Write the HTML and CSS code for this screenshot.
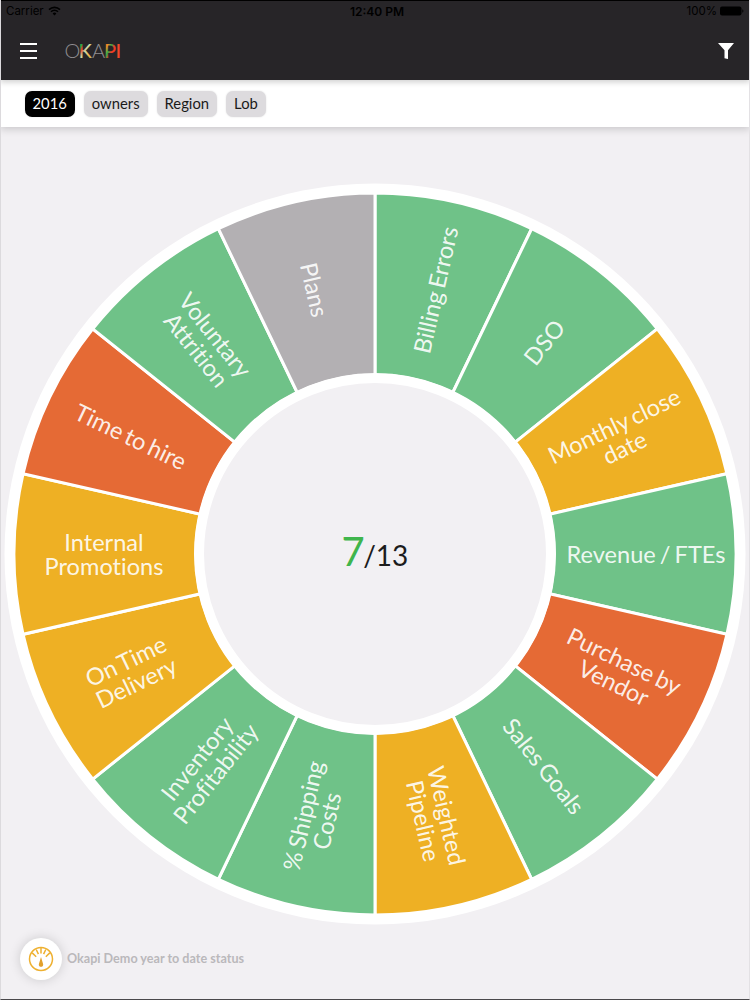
FILE: index.html
```html
<!DOCTYPE html>
<html lang="en">
<head>
    <meta charset="UTF-8">
    <meta name="viewport" content="width=device-width, initial-scale=1.0">
    <title>Okapi</title>
    <link rel="stylesheet" href="styles.css">
</head>
<body>
    <header class="header">
        <div class="status-bar">
            <div class="carrier">
                <span>Carrier</span>
                <svg width="13" height="10" viewBox="0 0 13 10" fill="none" stroke="#000" stroke-width="1.6">
                    <path d="M1 3.6a7.8 7.8 0 0 1 11 0"/>
                    <path d="M3 5.8a5 5 0 0 1 7 0"/>
                    <path d="M6.5 9.4L4.6 7.4a2.7 2.7 0 0 1 3.8 0z" fill="#000" stroke="none"/>
                </svg>
            </div>
            <span class="clock">12:40 PM</span>
            <div class="battery">
                <span>100%</span>
                <svg width="24" height="10" viewBox="0 0 24 10">
                    <rect x="0" y="0.5" width="21.5" height="9" rx="2"/>
                    <path d="M22.3 3.2a2 2 0 0 1 0 3.6z"/>
                </svg>
            </div>
        </div>
        <div class="nav">
            <svg class="menu" width="17" height="16" viewBox="0 0 17 16" fill="#fff">
                <rect y="0" width="17" height="2"/>
                <rect y="7" width="17" height="2"/>
                <rect y="14" width="17" height="2"/>
            </svg>
            <svg class="logo" width="60" height="28" viewBox="0 0 60 28">
                <defs>
                    <linearGradient id="stripes" x1="0" y1="0" x2="1" y2="1">
                        <stop offset="0" stop-color="#2fae4a"/>
                        <stop offset="0.25" stop-color="#1fb045"/>
                        <stop offset="0.35" stop-color="#e8452c"/>
                        <stop offset="0.5" stop-color="#c8dcae"/>
                        <stop offset="0.75" stop-color="#f0b040"/>
                        <stop offset="1" stop-color="#7ec8a0"/>
                    </linearGradient>
                    <linearGradient id="fire" x1="0" y1="0" x2="1" y2="1">
                        <stop offset="0" stop-color="#f03420"/>
                        <stop offset="0.3" stop-color="#f08a2a"/>
                        <stop offset="0.45" stop-color="#2fae4a"/>
                        <stop offset="0.6" stop-color="#f03c24"/>
                        <stop offset="1" stop-color="#f03c24"/>
                    </linearGradient>
                </defs>
                <text x="-0.5" y="21" class="logo-thin">O</text>
                <text x="13.5" y="21" class="logo-bold" fill="url(#stripes)">K</text>
                <text x="27" y="21" class="logo-thin">A</text>
                <text x="39" y="21" class="logo-bold" fill="url(#fire)">P</text>
                <text x="50.5" y="21" class="logo-bold" fill="#f0482a">I</text>
            </svg>
            <svg class="funnel" width="16" height="16" viewBox="0 0 16 16" fill="#fff">
                <path d="M0 0h16L10 7.2V16L6.5 15.2V7.2z"/>
            </svg>
        </div>
    </header>

    <div class="filters">
        <button class="chip active">2016</button>
        <button class="chip">owners</button>
        <button class="chip">Region</button>
        <button class="chip">Lob</button>
    </div>

    <main class="content">
        <svg class="wheel" id="wheel" width="742" height="742" viewBox="-371 -371 742 742">
            <circle r="370.5" fill="#fff"/>
            <g id="slices"></g>
            <circle r="176" class="hub"/>
            <text x="-33.5" y="12"><tspan class="score">7</tspan><tspan class="total" dx="-1.5">/13</tspan></text>
        </svg>
    </main>

    <footer class="footer">
        <div class="gauge">
            <svg width="26" height="26" viewBox="0 0 26 26" fill="none" stroke="#eeb030" stroke-width="1.5">
                <circle cx="13" cy="13" r="11.5"/>
                <path d="M13 2v5.5M8.2 3.5l2.2 4.6M17.8 3.5l-2.2 4.6M4.2 6.9l4 3.8M21.8 6.9l-4 3.8"/>
                <path d="M13 11l2.1 7a2.2 2.2 0 1 1-4.2 0z" fill="#e2a02c" stroke="none"/>
            </svg>
        </div>
        <span>Okapi Demo year to date status</span>
    </footer>

    <script src="wheel.js"></script>
</body>
</html>
```
FILE: styles.css
```css
* {
    margin: 0;
    padding: 0;
    box-sizing: border-box;
}

body {
    font-family: Lato, sans-serif;
    background-color: #f2f0f3;
    height: 100vh;
    display: flex;
    flex-direction: column;
    border-left: 1px solid #dcdadd;
    border-right: 1px solid #e3e1e4;
    border-bottom: 1px solid #4a484b;
}

.header {
    flex: none;
    height: 80px;
    margin: 0 -1px;
    background-color: #272528;
    border-top: 1px solid #000;
    box-shadow: 0 2px 6px rgba(0, 0, 0, 0.2);
    position: relative;
}

.status-bar {
    display: grid;
    grid-template-columns: 1fr auto 1fr;
    align-items: center;
    height: 20px;
    padding: 0 6px;
    font-family: Inter, sans-serif;
    font-size: 11.5px;
    color: #000;
}

.carrier,
.battery {
    display: flex;
    align-items: center;
    gap: 4px;
}

.battery {
    justify-content: flex-end;
    gap: 3px;
}

.clock {
    font-size: 12px;
    font-weight: 600;
    padding-left: 4px;
}

.nav {
    display: flex;
    align-items: center;
    height: 59px;
    padding: 0 16px 0 20px;
}

.logo {
    margin-left: 28px;
    overflow: visible;
}

.logo-thin,
.logo-bold {
    font-size: 20px;
    font-weight: 300;
}

.logo-thin {
    fill: #8f8d90;
}

.logo-bold {
    font-weight: 500;
}

.funnel {
    margin-left: auto;
}

.filters {
    flex: none;
    display: flex;
    gap: 9px;
    height: 47px;
    margin: 0 -1px;
    padding: 11px 24.5px 0;
    background-color: #fff;
    box-shadow: 0 2px 8px rgba(0, 0, 0, 0.18);
}

.chip {
    height: 26px;
    padding: 0 8px 3px;
    border: none;
    border-radius: 7px;
    background-color: #dddbde;
    box-shadow: 0 0 2px rgba(0, 0, 0, 0.12);
    color: #1a1a1a;
    font-family: Lato, sans-serif;
    font-size: 14.8px;
}

.chip.active {
    background-color: #000;
    color: #fff;
}

.content {
    display: flex;
    justify-content: center;
    padding-top: 55.5px;
}

.wheel {
    flex: none;
}

.slice {
    stroke: #fff;
    stroke-width: 3;
}

.hub {
    fill: #f2f0f3;
    stroke: #fff;
    stroke-width: 10;
}

.green {
    fill: #6fc288;
}

.yellow {
    fill: #eeb024;
}

.red {
    fill: #e56a35;
}

.grey {
    fill: #b3b0b3;
}

.label {
    fill: #fff;
    fill-opacity: 0.9;
    font-size: 23.6px;
    font-variant-ligatures: none;
    word-spacing: -2px;
    text-anchor: middle;
}

.score {
    font-size: 40px;
    fill: #3fb54c;
}

.total {
    font-size: 28px;
    fill: #1c1c1c;
}

.footer {
    display: flex;
    align-items: center;
    gap: 5px;
    padding: 13px 19px 0;
    font-size: 12.6px;
    font-weight: 700;
    color: #bab8bb;
}

.gauge {
    width: 42px;
    height: 42px;
    border-radius: 50%;
    background-color: #fff;
    box-shadow: 0 0 12px rgba(0, 0, 0, 0.16);
    display: flex;
    align-items: center;
    justify-content: center;
}
```
FILE: wheel.js
```js
const indicators = [
    { lines: ['Billing Errors'], color: 'green' },
    { lines: ['DSO'], color: 'green' },
    { lines: ['Monthly close', 'date'], color: 'yellow' },
    { lines: ['Revenue / FTEs'], color: 'green' },
    { lines: ['Purchase by', 'Vendor'], color: 'red' },
    { lines: ['Sales Goals'], color: 'green' },
    { lines: ['Weighted', 'Pipeline'], color: 'yellow' },
    { lines: ['% Shipping', 'Costs'], color: 'green' },
    { lines: ['Inventory', 'Profitability'], color: 'green' },
    { lines: ['On Time', 'Delivery'], color: 'yellow' },
    { lines: ['Internal', 'Promotions'], color: 'yellow' },
    { lines: ['Time to hire'], color: 'red' },
    { lines: ['Voluntary', 'Attrition'], color: 'green' },
    { lines: ['Plans'], color: 'grey' }
];

const outer = 361;
const inner = 179;
const labelRadius = 271;
const lineHeight = 24;
const step = 360 / indicators.length;

// angle in degrees, clockwise from the top
function point(radius, angle) {
    const rad = angle * Math.PI / 180;
    return (radius * Math.sin(rad)).toFixed(2) + ' ' + (-radius * Math.cos(rad)).toFixed(2);
}

let html = '';
indicators.forEach(function(item, i) {
    const start = i * step;
    const end = start + step;
    const left = start >= 180;

    html += `<path class="slice ${item.color}" d="M${point(outer, start)}A${outer} ${outer} 0 0 1 ${point(outer, end)}L${point(inner, end)}A${inner} ${inner} 0 0 0 ${point(inner, start)}Z"/>`;

    // labels on the left half are flipped so they stay readable
    const rotation = start + step / 2 + (left ? 90 : -90);
    const x = left ? -labelRadius : labelRadius;
    const firstLine = 9 - (item.lines.length - 1) * lineHeight / 2;
    const text = item.lines.map((line, n) => `<tspan x="${x}" y="${firstLine + n * lineHeight}">${line}</tspan>`).join('');
    html += `<text class="label" transform="rotate(${rotation})">${text}</text>`;
});

document.getElementById('slices').innerHTML = html;
```
